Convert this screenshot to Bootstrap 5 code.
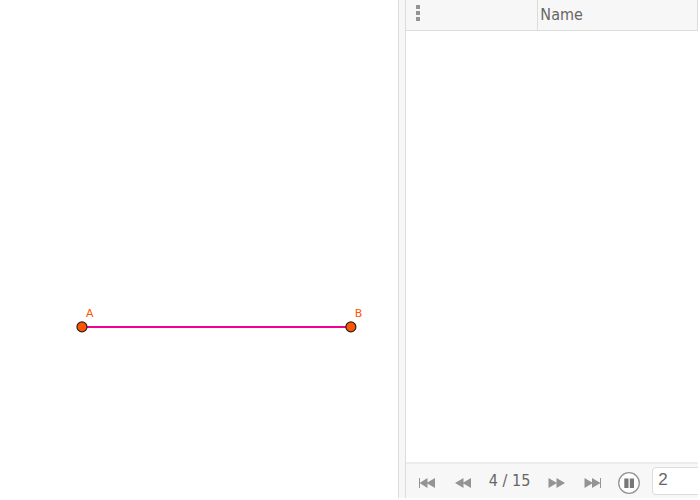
<!DOCTYPE html>
<html lang="en">
<head>
<meta charset="utf-8">
<meta name="viewport" content="width=device-width, initial-scale=1">
<title>Construction protocol</title>
<link href="https://cdn.jsdelivr.net/npm/bootstrap@5.3.0/dist/css/bootstrap.min.css" rel="stylesheet">
<style>
body { font-family: "DejaVu Sans Condensed", "DejaVu Sans", sans-serif; font-size: 16px; color: #666; background: #fff; }
.workspace { padding: 0 2px 2px 0; }
.graphics { flex: 0 0 57%; }
.graphics svg { width: 100%; height: 100%; }
.graphics text { font: 11px "DejaVu Sans", sans-serif; font-stretch: normal; fill: #ff5500; }
.splitter { flex: 0 0 8px; background: #f7f7f7; border: solid #dcdcdc; border-width: 0 1px; }
.protocol { min-width: 0; }
.steps { table-layout: fixed; }
.steps th { height: 30px; padding: 0 2px; font-weight: 400; line-height: 24px; vertical-align: middle; background: #f7f7f7; border: solid #dcdcdc; border-width: 0 1px 1px 0; }
.steps .menu-col { width: 132px; padding: 0 0 4px 10px; }
.steps button { line-height: 0; }
.playbar { gap: 18px; height: 36px; padding: 3px 0 3px 12px; background: #f7f7f7; border-top: 2px solid #ececec; }
.playbar button { line-height: 0; color: #949494; }
.playbar .step-icon { margin-top: 4px; }
.playbar .play { gap: 12px; margin-left: -2px; }
.playbar .pause { margin-top: 4px; }
.playbar input { width: 80px; height: 28px; padding: 0 5px 2px; font: 17px "Liberation Sans", Arial, sans-serif; color: #666; border: 1px solid #dcdcdc; border-radius: 4px; background: #fff; }
</style>
<script src="https://cdn.jsdelivr.net/npm/bootstrap@5.3.0/dist/js/bootstrap.bundle.min.js"></script>
</head>
<body>
<main class="workspace d-flex vh-100 overflow-hidden">
  <section class="graphics" aria-label="Graphics view">
    <svg class="d-block" viewBox="0 0 398 498" preserveAspectRatio="xMinYMin meet" role="img" aria-label="Segment AB">
      <path d="M82 327H351" stroke="#f0009a" stroke-width="2"/>
      <g fill="#ff5500" stroke="#222" stroke-width="1.2"><circle cx="82" cy="327" r="5"/><circle cx="351" cy="327" r="5"/></g>
      <text x="86" y="317">A</text>
      <text x="355" y="317">B</text>
    </svg>
  </section>
  <div class="splitter"></div>
  <section class="protocol d-flex flex-column flex-fill overflow-hidden">
    <div class="flex-fill">
      <table class="steps w-100">
        <thead>
          <tr>
            <th class="menu-col" scope="col"><button type="button" class="btn p-0 border-0 d-block" aria-label="Columns"><svg width="4" height="18" viewBox="0 0 4 18" fill="#949494"><path d="M0 1h4v4H0zM0 7h4v4H0zM0 13h4v4H0z"/></svg></button></th>
            <th scope="col">Name</th>
          </tr>
        </thead>
      </table>
    </div>
    <div class="playbar d-flex align-items-center flex-shrink-0">
      <button type="button" class="btn p-0 border-0 step-icon" aria-label="First step"><svg width="18" height="12" viewBox="0 0 18 12" fill="currentColor"><path d="M1 1h1v10H1zM9.500 1v10L1.500 6zM17 1v10L8.500 6z"/></svg></button>
      <button type="button" class="btn p-0 border-0 step-icon" aria-label="Previous step"><svg width="17" height="12" viewBox="0 0 17 12" fill="currentColor"><path d="M9.500 1v10L1 6zM17 1v10L8.500 6z"/></svg></button>
      <span class="text-nowrap">4 / 15</span>
      <button type="button" class="btn p-0 border-0 step-icon" aria-label="Next step"><svg width="18" height="12" viewBox="0 0 18 12" fill="currentColor"><path d="M0.500 1v10L9 6zM8.500 1v10L17 6z"/></svg></button>
      <button type="button" class="btn p-0 border-0 step-icon" aria-label="Last step"><svg width="18" height="12" viewBox="0 0 18 12" fill="currentColor"><path d="M0.500 1v10L9 6zM8 1v10L16.500 6zM16 1h1v10h-1z"/></svg></button>
      <div class="play d-flex align-items-center flex-shrink-0">
        <button type="button" class="btn p-0 border-0 pause" aria-label="Pause"><svg width="22" height="22" viewBox="0 0 22 22"><circle cx="11" cy="11" r="10.300" fill="#fff" stroke="#949494" stroke-width="1.300"/><path d="M6.300 6.500h4.200v9.500h-4.200zM11.800 6.500h4.200v9.500h-4.200z" fill="#777"/></svg></button>
        <input type="text" inputmode="numeric" value="2" aria-label="Seconds per step">
      </div>
    </div>
  </section>
</main>
</body>
</html>
